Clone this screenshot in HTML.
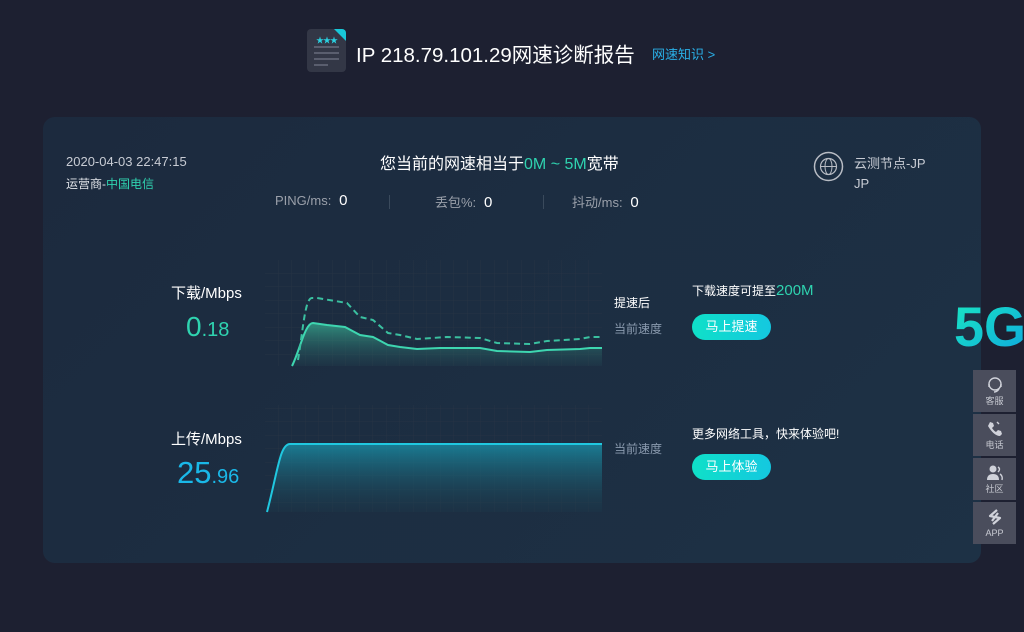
<!DOCTYPE html>
<html><head><meta charset="utf-8">
<style>
*{margin:0;padding:0;box-sizing:border-box}
body{width:1024px;height:632px;background:#1d2031;font-family:"Liberation Sans","Noto Sans CJK SC",sans-serif;position:relative;overflow:hidden;color:#e6e9ee}
.abs{position:absolute}
.card{left:43px;top:117px;width:938px;height:446px;border-radius:12px;background:linear-gradient(135deg,#1c2a3e,#1d3145)}
.btn{width:79px;height:26px;border-radius:13px;background:linear-gradient(90deg,#0fe0c8,#14c8e0);color:#fff;font-size:13px;text-align:center;line-height:26px}
.side{left:973px;width:43px;height:42px;background:#4a4d5c;color:#c8cad2;font-size:9px;text-align:center;line-height:11px}
.side svg{display:block;margin:6px auto 2px}
</style></head><body>
<div class="abs" style="left:307px;top:29px;width:39px;height:43px;border-radius:4px;background:#333746;overflow:hidden">
 <div class="abs" style="right:0;top:0;width:0;height:0;border-left:12px solid transparent;border-top:12px solid #18c8d8"></div>
 <div class="abs" style="left:9px;top:6px;color:#2ad0e0;font-size:8px;letter-spacing:-1px">★★★</div>
 <div class="abs" style="left:7px;top:17px;width:25px;height:2px;background:#5a5e6e"></div>
 <div class="abs" style="left:7px;top:23px;width:25px;height:2px;background:#5a5e6e"></div>
 <div class="abs" style="left:7px;top:29px;width:25px;height:2px;background:#5a5e6e"></div>
 <div class="abs" style="left:7px;top:35px;width:14px;height:2px;background:#5a5e6e"></div>
</div>
<div class="abs" style="left:356px;top:38px;font-size:20.5px;color:#fff">IP 218.79.101.29网速诊断报告</div>
<div class="abs" style="left:652px;top:44px;font-size:13px;color:#2ab0e8">网速知识 &gt;</div>

<div class="abs card"></div>
<div class="abs" style="left:66px;top:154px;font-size:13px;color:#c8ccd4">2020-04-03 22:47:15</div>
<div class="abs" style="left:66px;top:175px;font-size:12px;color:#e0e3e8">运营商-<span style="color:#2fd3b0">中国电信</span></div>
<div class="abs" style="left:380px;top:150px;font-size:16px;color:#fff">您当前的网速相当于<span style="color:#2fd3b0">0M ~ 5M</span>宽带</div>
<div class="abs" style="left:275px;top:192px;font-size:13px;color:#9aa0aa">PING/ms: <span style="color:#fff;font-size:15px">&nbsp;0</span></div>
<div class="abs" style="left:389px;top:195px;width:1px;height:14px;background:#3a4a5c"></div>
<div class="abs" style="left:435px;top:192px;font-size:13px;color:#9aa0aa">丢包%: <span style="color:#fff;font-size:15px">&nbsp;0</span></div>
<div class="abs" style="left:543px;top:195px;width:1px;height:14px;background:#3a4a5c"></div>
<div class="abs" style="left:572px;top:192px;font-size:13px;color:#9aa0aa">抖动/ms: <span style="color:#fff;font-size:15px">&nbsp;0</span></div>
<svg class="abs" style="left:813px;top:151px" width="31" height="31" viewBox="0 0 31 31"><circle cx="15.5" cy="15.5" r="14" fill="none" stroke="#b8bcc4" stroke-width="1.5"/><circle cx="15.5" cy="15.5" r="8" fill="none" stroke="#b8bcc4" stroke-width="1.2"/><ellipse cx="15.5" cy="15.5" rx="3.5" ry="8" fill="none" stroke="#b8bcc4" stroke-width="1"/><line x1="7.5" y1="15.5" x2="23.5" y2="15.5" stroke="#b8bcc4"/></svg>
<div class="abs" style="left:854px;top:154px;font-size:13px;color:#c8ccd4;line-height:20px">云测节点-JP<br>JP</div>

<div class="abs" style="left:171px;top:282px;font-size:15px;color:#fff">下载/Mbps</div>
<div class="abs" style="left:186px;top:311px;font-size:28px;color:#2fd3b0">0<span style="font-size:20px">.18</span></div>
<div class="abs" style="left:171px;top:428px;font-size:15px;color:#fff">上传/Mbps</div>
<div class="abs" style="left:177px;top:455px;font-size:31px;color:#1ab8e8">25<span style="font-size:20px">.96</span></div>

<svg class="abs" style="left:0;top:0" width="1024" height="632">
<defs>
<pattern id="g" x="265" y="260" width="13.5" height="13.5" patternUnits="userSpaceOnUse"><path d="M13.5 0V13.5M0 13.5H13.5" stroke="#263344" stroke-width="1" fill="none"/></pattern>
<linearGradient id="a" x1="0" y1="0" x2="0" y2="1"><stop offset="0" stop-color="#3ab898" stop-opacity=".7"/><stop offset="1" stop-color="#2a6a6a" stop-opacity=".1"/></linearGradient>
<linearGradient id="b" x1="0" y1="0" x2="0" y2="1"><stop offset="0" stop-color="#1a90a8" stop-opacity=".8"/><stop offset="1" stop-color="#1a4050" stop-opacity=".2"/></linearGradient>
<linearGradient id="f" x1="0" y1="0" x2="1" y2="1"><stop offset="0" stop-color="#1ae8c0"/><stop offset="1" stop-color="#0ea8e0"/></linearGradient>
</defs>
<rect x="265" y="260" width="337" height="106" fill="url(#g)"/>
<rect x="265" y="405" width="337" height="107" fill="url(#g)"/>
<path d="M292 366 C300 350 305 323 313 323 L327 325 345 327 360 335 373 337 388 345 400 347 417 349 440 348 480 348 497 351 530 352 547 350 580 349 590 348 602 348 L602 366Z" fill="url(#a)"/>
<path d="M292 366 C300 350 305 323 313 323 L327 325 345 327 360 335 373 337 388 345 400 347 417 349 440 348 480 348 497 351 530 352 547 350 580 349 590 348 602 348" fill="none" stroke="#3ed6b0" stroke-width="2"/>
<path d="M298 360 C303 330 305 298 312 298 L317 298 347 303 360 317 373 320 388 333 400 335 417 339 447 337 480 338 497 343 530 344 547 341 580 339 590 337 602 337" fill="none" stroke="#3ac0a0" stroke-width="2" stroke-dasharray="6 4"/>
<path d="M267 512 C278 470 280 444 290 444 L602 444 L602 512Z" fill="url(#b)"/>
<path d="M267 512 C278 470 280 444 290 444 L602 444" fill="none" stroke="#20c8e0" stroke-width="2"/>
<text x="954" y="346" font-family="Liberation Sans" font-weight="bold" font-size="56" fill="url(#f)" textLength="72" lengthAdjust="spacingAndGlyphs">5G</text>
</svg>
<div class="abs" style="left:614px;top:294px;font-size:12px;color:#fff">提速后</div>
<div class="abs" style="left:614px;top:320px;font-size:12px;color:#8a9aae">当前速度</div>
<div class="abs" style="left:614px;top:440px;font-size:12px;color:#8a9aae">当前速度</div>

<div class="abs" style="left:692px;top:282px;font-size:12px;color:#fff">下载速度可提至<span style="color:#2fd3b0;font-size:15px">200M</span></div>
<div class="abs btn" style="left:692px;top:314px">马上提速</div>
<div class="abs" style="left:692px;top:425px;font-size:12px;color:#fff">更多网络工具，快来体验吧!</div>
<div class="abs btn" style="left:692px;top:454px">马上体验</div>

<div class="abs side" style="top:370px"><svg width="18" height="18" viewBox="0 0 18 18"><circle cx="9" cy="8" r="6" fill="none" stroke="#d0d2da" stroke-width="1.4"/><path d="M3 8v3M15 8v3M13 13q-2 3-5 3" fill="none" stroke="#d0d2da" stroke-width="1.4"/></svg>客服</div>
<div class="abs side" style="top:414px"><svg width="18" height="18" viewBox="0 0 18 18"><path d="M4 2l3 1 1 3-2 2q2 3 4 4l2-2 3 1 1 3-2 2Q8 16 2 6z" fill="#d0d2da"/><path d="M11 2l2 2" stroke="#d0d2da" stroke-width="1.4"/></svg>电话</div>
<div class="abs side" style="top:458px"><svg width="18" height="18" viewBox="0 0 18 18"><circle cx="7" cy="5" r="3.5" fill="#d0d2da"/><path d="M1 16q0-6 6-6t6 6z" fill="#d0d2da"/><path d="M12 3q3 2 0 5M14 10q3 2 2 6" fill="none" stroke="#d0d2da" stroke-width="1.4"/></svg>社区</div>
<div class="abs side" style="top:502px"><svg width="18" height="18" viewBox="0 0 18 18"><path d="M11 2L4 8l5 1-3 4M7 16l7-6-5-1 3-4" fill="none" stroke="#d0d2da" stroke-width="2.2" stroke-linejoin="round"/></svg>APP</div>
</body></html>
